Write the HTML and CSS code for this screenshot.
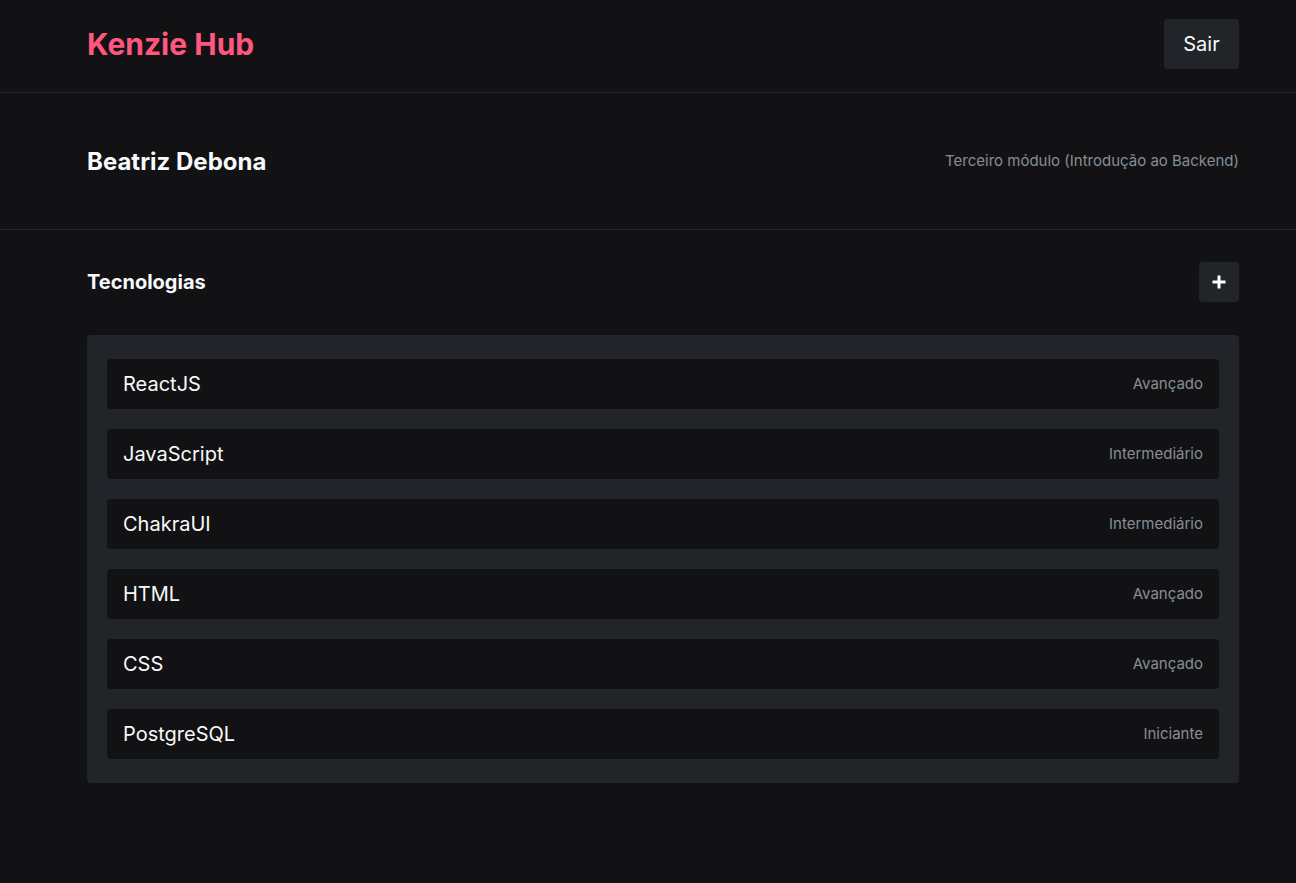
FILE: index.html
```html
<!DOCTYPE html>
<html lang="pt-BR">
<head>
<meta charset="utf-8">
<title>Kenzie Hub</title>
<link rel="stylesheet" href="styles.css">
</head>
<body>
<header class="topbar">
  <div class="wrap topbar-inner">
    <h1 class="logo">Kenzie Hub</h1>
    <button class="btn-dark btn-exit">Sair</button>
  </div>
</header>
<section class="profile">
  <div class="wrap profile-inner">
    <h2 class="user-name">Beatriz Debona</h2>
    <p class="user-module">Terceiro módulo (Introdução ao Backend)</p>
  </div>
</section>
<main class="wrap techs">
  <div class="techs-head">
    <h3 class="techs-title">Tecnologias</h3>
    <button class="btn-dark btn-add" aria-label="Adicionar">
      <svg width="16" height="16" viewBox="0 0 16 16"><path d="M8 1.5v13M1.5 8h13" stroke="#fff" stroke-width="3" fill="none"/></svg>
    </button>
  </div>
  <ul class="tech-list">
    <li class="tech-item"><span class="tech-name">ReactJS</span><span class="tech-level">Avançado</span></li>
    <li class="tech-item"><span class="tech-name">JavaScript</span><span class="tech-level">Intermediário</span></li>
    <li class="tech-item"><span class="tech-name">ChakraUI</span><span class="tech-level">Intermediário</span></li>
    <li class="tech-item"><span class="tech-name">HTML</span><span class="tech-level">Avançado</span></li>
    <li class="tech-item"><span class="tech-name">CSS</span><span class="tech-level">Avançado</span></li>
    <li class="tech-item"><span class="tech-name">PostgreSQL</span><span class="tech-level">Iniciante</span></li>
  </ul>
</main>
</body>
</html>
```

FILE: styles.css
```css
* { box-sizing: border-box; }
html, body { margin: 0; padding: 0; }
body {
  background: #121214;
  color: #f8f9fa;
  font-family: Inter, "Noto Sans", sans-serif;
  min-height: 883px;
}
.wrap {
  margin: 0 57px 0 87px;
}
.topbar {
  border-bottom: 1px solid #212529;
}
.topbar-inner {
  height: 92px;
  padding: 19px 0 23px;
  display: flex;
  justify-content: space-between;
  align-items: center;
}
.logo {
  margin: 0;
  color: #ff577f;
  font-size: 30px;
  font-weight: 700;
}
.btn-dark {
  background: #212529;
  color: #f8f9fa;
  border: none;
  border-radius: 4px;
  font-family: inherit;
  cursor: pointer;
}
.btn-exit {
  width: 75px;
  height: 50px;
  font-size: 20px;
  font-weight: 400;
}
.profile {
  border-bottom: 1px solid #212529;
}
.profile-inner {
  height: 136px;
  display: flex;
  justify-content: space-between;
  align-items: center;
}
.user-name {
  margin: 0;
  font-size: 24px;
  font-weight: 700;
}
.user-module {
  margin: 0 0 2px;
  font-size: 15px;
  color: #868e96;
}
.techs-head {
  margin-top: 32px;
  height: 40px;
  display: flex;
  justify-content: space-between;
  align-items: center;
}
.techs-title {
  margin: 0;
  font-size: 20px;
  font-weight: 700;
}
.btn-add {
  width: 40px;
  height: 40px;
  display: flex;
  align-items: center;
  justify-content: center;
  padding: 0;
}
.tech-list {
  list-style: none;
  margin: 33px 0 0;
  padding: 24px 20px;
  background: #212529;
  border-radius: 4px;
  display: flex;
  flex-direction: column;
  gap: 20px;
}
.tech-item {
  height: 50px;
  background: #121214;
  border-radius: 4px;
  padding: 0 16px;
  display: flex;
  justify-content: space-between;
  align-items: center;
}
.tech-name {
  font-size: 20px;
  font-weight: 400;
}
.tech-level {
  font-size: 15px;
  color: #868e96;
  margin-bottom: 2px;
}
```
